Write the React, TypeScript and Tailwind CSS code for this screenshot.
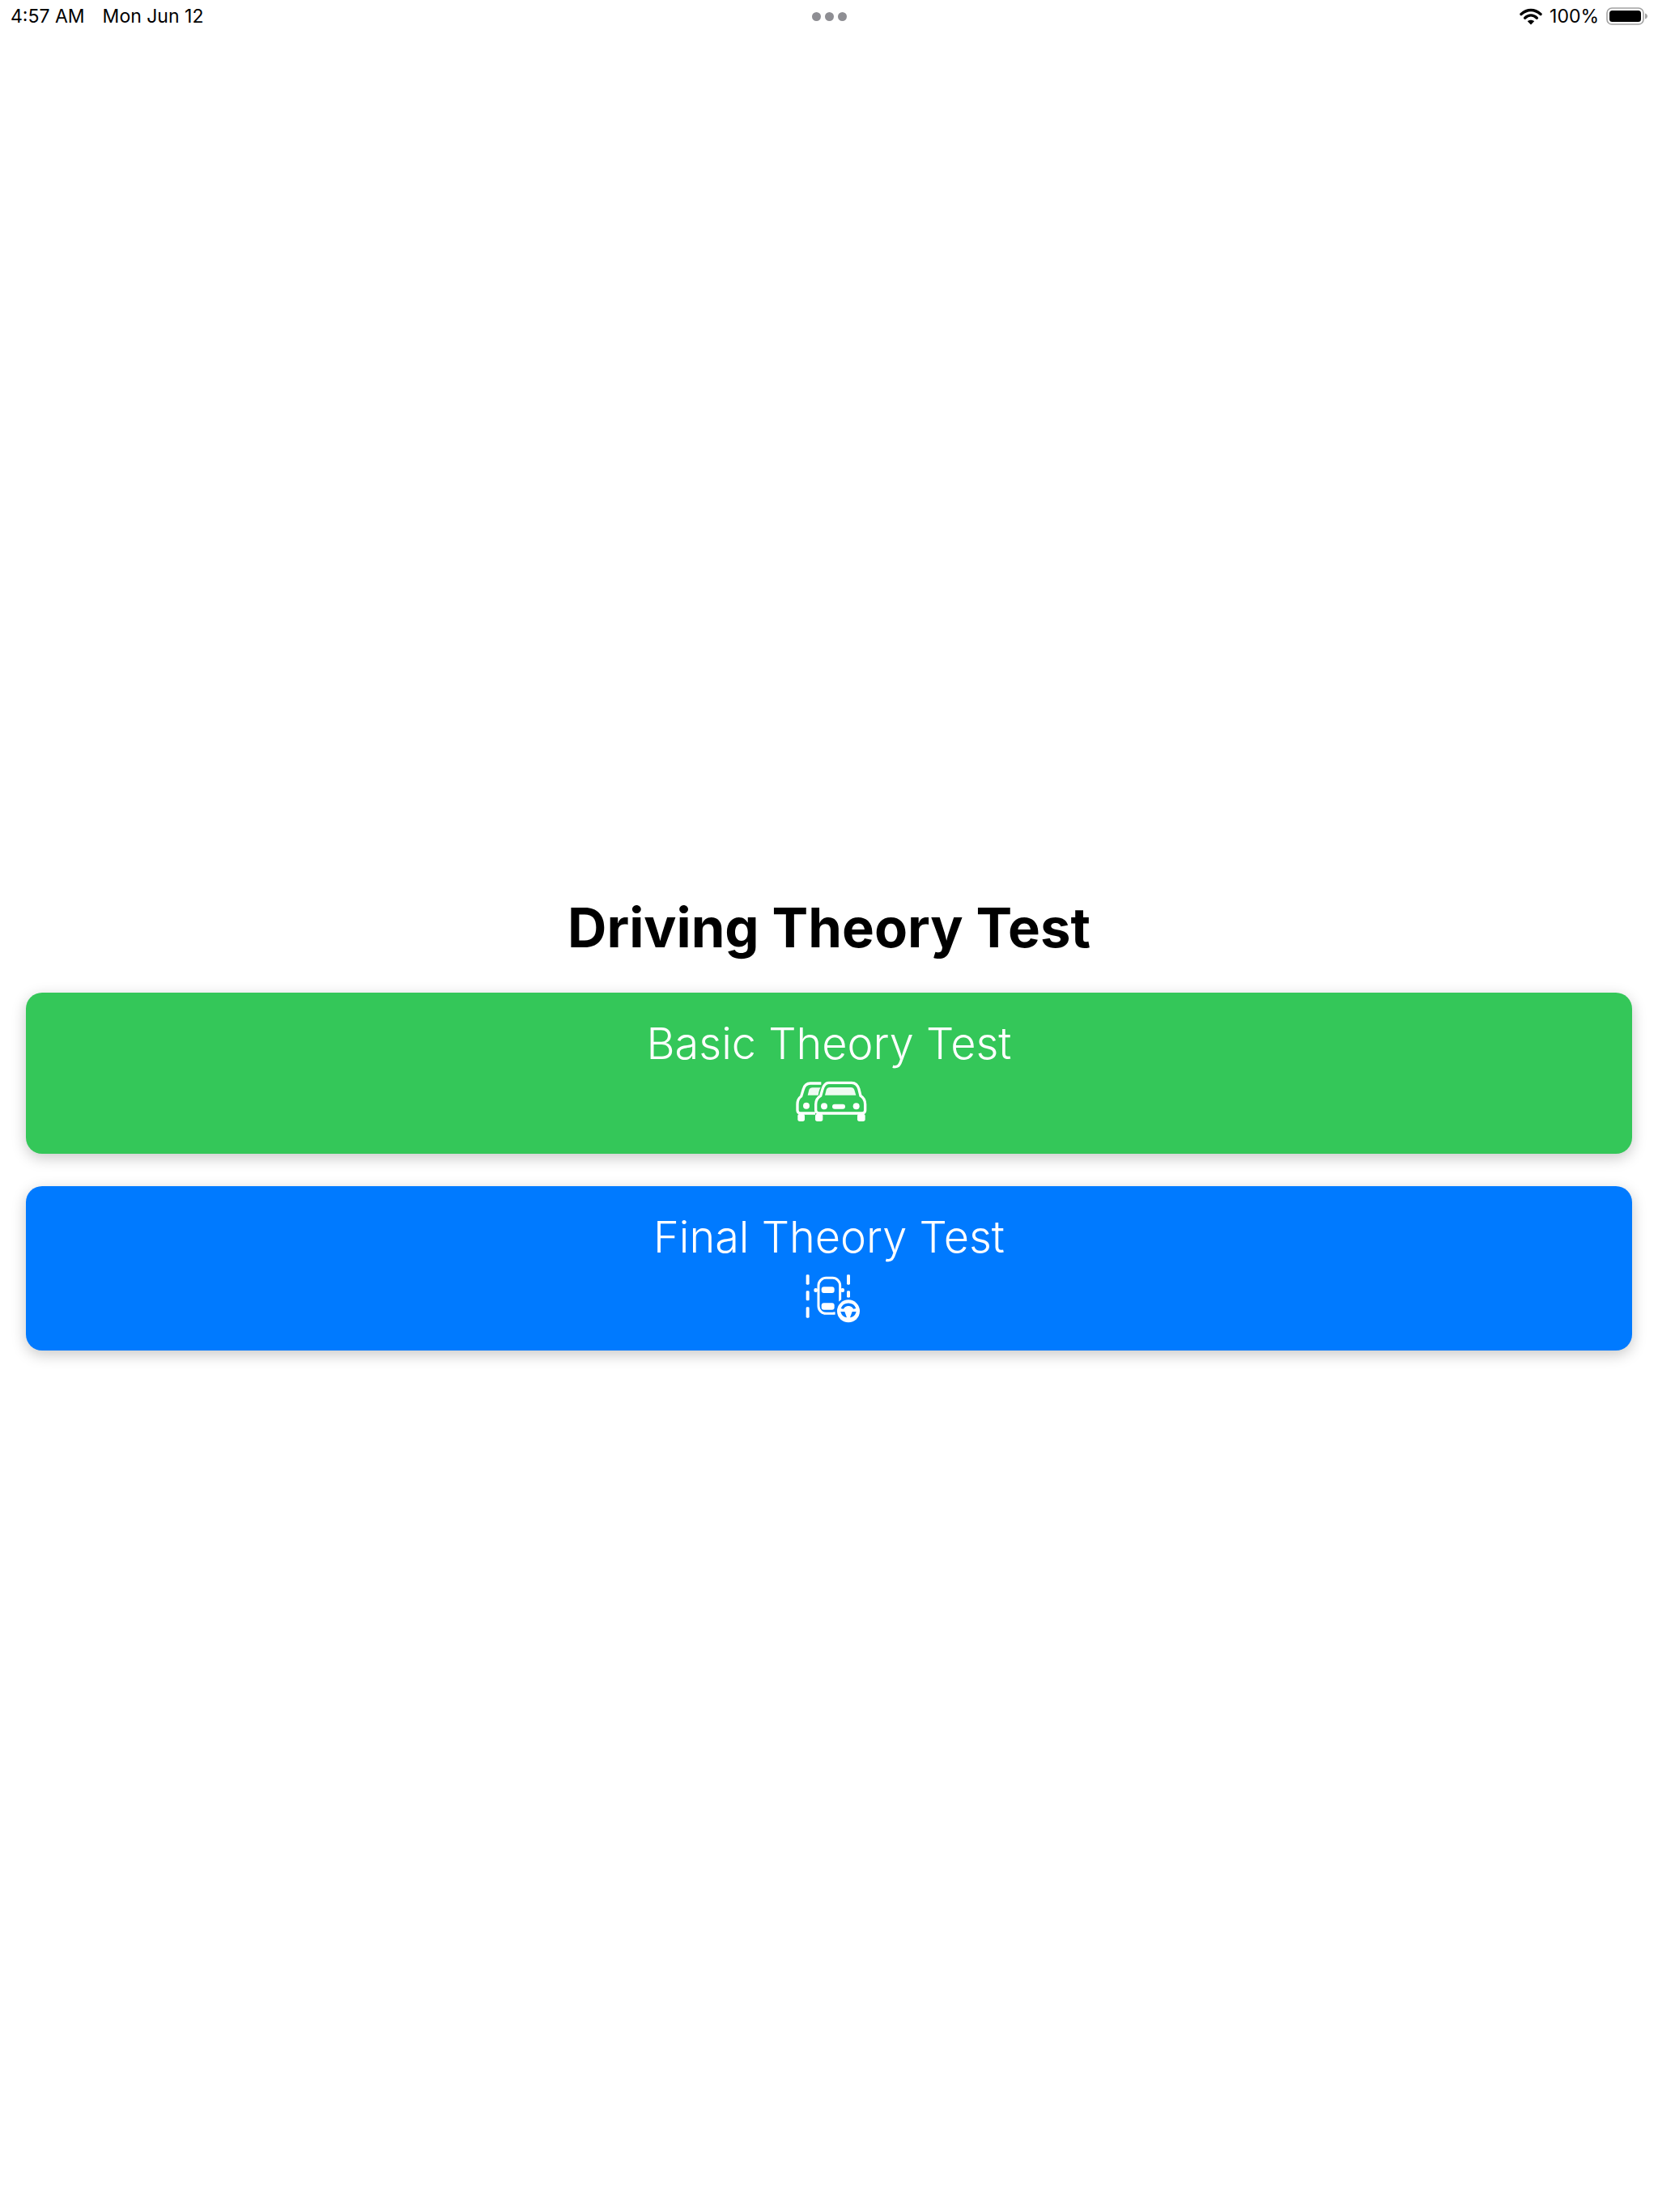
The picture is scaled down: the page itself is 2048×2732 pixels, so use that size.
import React from "react";

const font = { fontFamily: "Inter, 'Liberation Sans', sans-serif" };

function Wifi() {
  return (
    <svg width="28" height="21" viewBox="0 0 28 21" fill="none">
      <path d="M2 7.5C9.5 0.8 18.5 0.8 26 7.5" stroke="#000" strokeWidth="3.4" strokeLinecap="round" />
      <path d="M6.6 12.2C11.2 8 16.8 8 21.4 12.2" stroke="#000" strokeWidth="3.4" strokeLinecap="round" />
      <path d="M14 20.6L9.8 16.2C12.2 14.2 15.8 14.2 18.2 16.2Z" fill="#000" />
    </svg>
  );
}

function Battery() {
  return (
    <svg width="51" height="22" viewBox="0 0 51 22" fill="none">
      <rect x="1" y="1" width="45" height="20" rx="6" stroke="#a3a3a3" strokeWidth="1.6" />
      <rect x="4" y="4" width="39" height="14" rx="3.5" fill="#000" />
      <path d="M48 7.5C50 8.2 51 9.4 51 11C51 12.6 50 13.8 48 14.5Z" fill="#a3a3a3" />
    </svg>
  );
}

function Cars() {
  return (
    <svg width="88" height="52" viewBox="78 40 264 156" fill="none" className="ml-[6px] block">
      <path d="M172 52H132Q112 52 106 74L98 100Q84 110 84 130V152Q84 162 94 163H150" stroke="#fff" strokeWidth="10" />
      <path d="M122 96L127 76Q130 68 140 68H170Q164 76 161 96Z" fill="#fff" fillOpacity="0.92" />
      <circle cx="117" cy="135" r="12" fill="#fff" />
      <rect x="85" y="165" width="26" height="28" rx="8" fill="#fff" />
      <rect x="150" y="165" width="28" height="28" rx="8" fill="#fff" />
      <path d="M200 50H285Q305 50 312 74L318 98Q335 108 335 130V152Q335 162 325 163H165Q152 162 152 152V130Q152 108 170 98L177 74Q184 50 200 50Z" stroke="#fff" strokeWidth="10" />
      <path d="M186 96L191 76Q194 67 204 67H282Q292 67 295 76L301 96Z" fill="#fff" fillOpacity="0.92" />
      <circle cx="183" cy="137" r="12" fill="#fff" />
      <circle cx="302" cy="137" r="12" fill="#fff" />
      <rect x="213" y="129" width="48" height="18" rx="9" fill="#fff" />
      <rect x="306" y="165" width="29" height="28" rx="8" fill="#fff" />
    </svg>
  );
}

function LaneCar() {
  return (
    <svg width="73" height="65" viewBox="50 25 219 195" fill="none" className="ml-[9px] block">
      <g fill="#fff">
        <rect x="61" y="35" width="12" height="37" rx="4" />
        <rect x="61" y="95" width="12" height="36" rx="4" />
        <rect x="61" y="155" width="12" height="40" rx="4" />
        <rect x="212" y="35" width="12" height="37" rx="4" />
        <rect x="212" y="95" width="12" height="25" rx="4" />
        <rect x="90" y="85" width="14" height="15" rx="6" />
        <rect x="189" y="85" width="14" height="15" rx="6" />
      </g>
      <rect x="107" y="47" width="80" height="132" rx="28" stroke="#fff" strokeWidth="9" />
      <rect x="118" y="80" width="48" height="23" rx="9" fill="#fff" />
      <rect x="118" y="140" width="48" height="25" rx="9" fill="#fff" />
      <circle cx="218" cy="170" r="50" fill="#007aff" />
      <circle cx="218" cy="170" r="42" fill="#fff" />
      <path d="M190 160A30 30 0 0 1 246 160L236 162A20 20 0 0 0 200 162Z" fill="#007aff" />
      <path d="M189 172L204 172L212 194Q194 192 189 172Z" fill="#007aff" />
      <path d="M247 172L232 172L224 194Q242 192 247 172Z" fill="#007aff" />
      <path d="M200 160H236V165H200Z" fill="#fff" />
    </svg>
  );
}

function Btn({ label, color, h, children }: { label: string; color: string; h: string; children: React.ReactNode }) {
  return (
    <button className={`${color} ${h} flex w-full flex-col items-center rounded-[20px] pt-[31px] text-white shadow-[0_5px_18px_rgba(0,0,0,0.22)]`}>
      <span className="text-[54px] font-light leading-[64px]">{label}</span>
      {children}
    </button>
  );
}

export default function App() {
  return (
    <div className="flex h-[2732px] flex-col bg-white text-black" style={font}>
      <div className="grid h-[40px] grid-cols-3 items-center px-[13px] text-[23px] leading-none">
        <div className="flex gap-[22px]">
          <span>4:57 AM</span>
          <span>Mon Jun 12</span>
        </div>
        <div className="flex justify-center gap-[5px]">
          <span className="size-[11px] rounded-full bg-[#8e8e93]" />
          <span className="size-[11px] rounded-full bg-[#8e8e93]" />
          <span className="size-[11px] rounded-full bg-[#8e8e93]" />
        </div>
        <div className="flex items-center justify-end gap-[9px] pr-[-2px]">
          <Wifi />
          <span>100%</span>
          <Battery />
        </div>
      </div>
      <h1 className="mt-[1066px] text-center text-[67px] font-bold leading-[80px]">Driving Theory Test</h1>
      <div className="mt-[40px] flex flex-col gap-[40px] px-[32px]">
        <Btn label="Basic Theory Test" color="bg-[#34c759]" h="h-[199px]">
          <div className="mt-[13px]"><Cars /></div>
        </Btn>
        <Btn label="Final Theory Test" color="bg-[#007aff]" h="h-[203px]">
          <div className="mt-[11px]"><LaneCar /></div>
        </Btn>
      </div>
    </div>
  );
}
